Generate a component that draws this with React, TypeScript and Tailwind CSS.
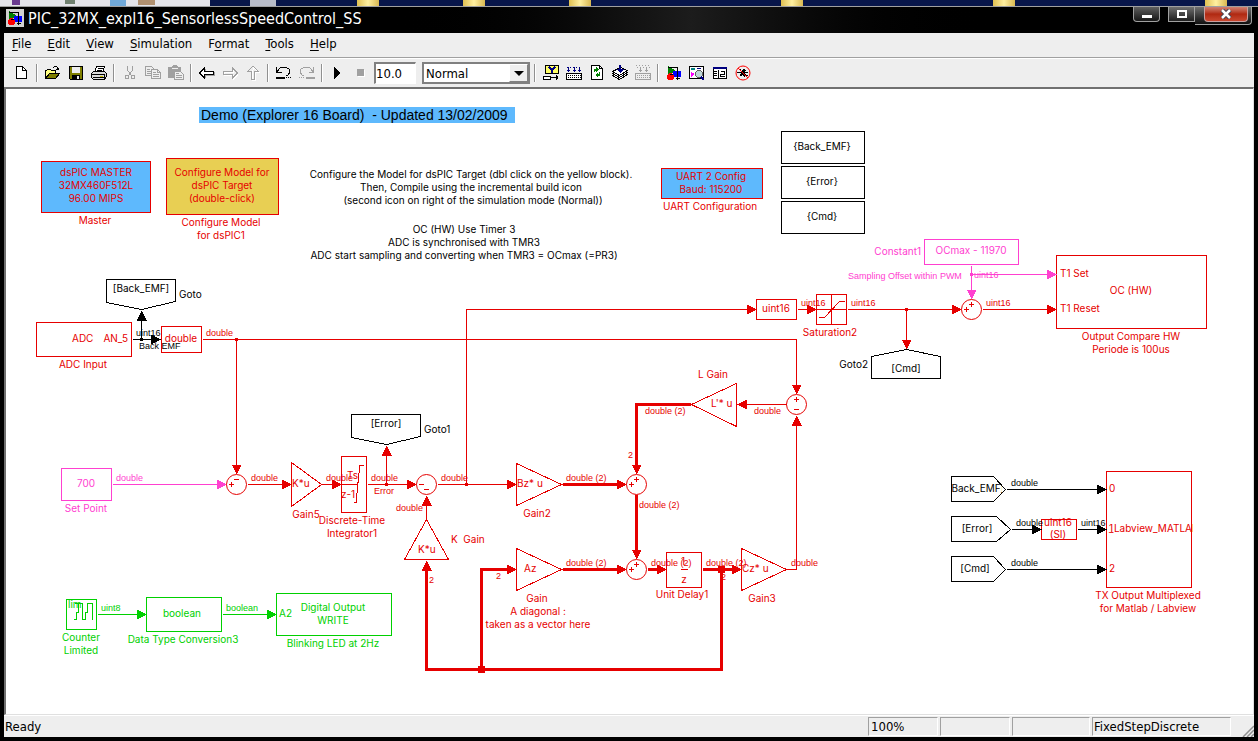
import React from "react";

const RED = "#e60000";
const PINK = "#ff40d0";
const GREEN = "#00d000";
const BLACK = "#000000";
const BLUE = "#5eb9fd";
const YELLOW = "#e8cf53";

/* ---------- diagram primitives ---------- */

type Anchor = "start" | "middle" | "end";
type Pt = [number, number];

function Txt({ x, y, c = RED, a = "middle", children }: { x: number; y: number; c?: string; a?: Anchor; children: React.ReactNode }) {
  return (
    <text x={x} y={y} fill={c} textAnchor={a} className="text-[10px] whitespace-pre [font-family:Inter,'Liberation_Sans',sans-serif]">
      {children}
    </text>
  );
}

function Sig({ x, y, c = RED, children }: { x: number; y: number; c?: string; children: string }) {
  return (
    <text x={x} y={y} fill={c} className="text-[9px]">
      {children}
    </text>
  );
}

function Box({ x1, y1, x2, y2, c = RED, fill = "#ffffff" }: { x1: number; y1: number; x2: number; y2: number; c?: string; fill?: string }) {
  return <rect x={x1} y={y1} width={x2 - x1} height={y2 - y1} stroke={c} fill={fill} />;
}

function Poly({ p, c = RED }: { p: Pt[]; c?: string }) {
  return <polygon points={p.map((q) => q.join(",")).join(" ")} stroke={c} fill="#ffffff" />;
}

const HEAD: Record<string, string> = {
  r: "M0 0L-10 -5V5Z",
  l: "M0 0L10 -5V5Z",
  u: "M0 0L-5 10H5Z",
  d: "M0 0L-5 -10H5Z",
};

function Wire({ p, c = RED, w = 1, head }: { p: Pt[]; c?: string; w?: number; head?: "r" | "l" | "u" | "d" }) {
  const end = p[p.length - 1];
  const line = p.slice();
  if (head) {
    const back: Record<string, Pt> = { r: [-4, 0], l: [4, 0], u: [0, 4], d: [0, -4] };
    line[line.length - 1] = [end[0] + back[head][0], end[1] + back[head][1]];
  }
  return (
    <g>
      <polyline points={line.map((q) => q.join(",")).join(" ")} stroke={c} strokeWidth={w} fill="none" />
      {head && <path d={HEAD[head]} transform={`translate(${end[0]} ${end[1]})`} fill={c} />}
    </g>
  );
}

function Dot({ x, y, c = RED, s = 3 }: { x: number; y: number; c?: string; s?: number }) {
  return <rect x={x - s / 2} y={y - s / 2} width={s} height={s} fill={c} />;
}

function Sum({ x, y, signs }: { x: number; y: number; signs: { dx: number; dy: number; plus: boolean }[] }) {
  return (
    <g>
      <circle cx={x} cy={y} r={10} stroke={RED} fill="#ffffff" shapeRendering="auto" />
      {signs.map((s, i) => (
        <path key={i} d={s.plus ? "M-2.5 0H2.5M0 -2.5V2.5" : "M-2.5 0H2.5"} transform={`translate(${x + s.dx} ${y + s.dy})`} stroke={RED} />
      ))}
    </g>
  );
}

const left = (plus: boolean) => ({ dx: -5, dy: 0, plus });
const top = (plus: boolean) => ({ dx: 0, dy: -5, plus });
const bottom = (plus: boolean) => ({ dx: 0, dy: 5, plus });

function Shapes() {
  return (
    <g transform="translate(0.5 0.5)" fill="none" shapeRendering="crispEdges">
      {/* configuration blocks */}
      <Box x1={41} y1={161} x2={150} y2={212} fill={BLUE} />
      <Box x1={166} y1={158} x2={278} y2={214} fill={YELLOW} />
      <Box x1={661} y1={168} x2={762} y2={198} fill={BLUE} />
      <Box x1={781} y1={131} x2={864} y2={163} c={BLACK} />
      <Box x1={781} y1={166} x2={864} y2={198} c={BLACK} />
      <Box x1={781} y1={201} x2={864} y2={233} c={BLACK} />

      {/* ADC */}
      <Poly c={BLACK} p={[[106, 279], [175, 279], [175, 301], [141, 309], [106, 302]]} />
      <Box x1={36} y1={322} x2={131} y2={356} />
      <Box x1={161} y1={326} x2={201} y2={352} />
      <Wire c={BLACK} p={[[132, 339], [160, 339]]} head="r" />
      <Wire c={BLACK} p={[[141, 339], [141, 310]]} head="u" />
      <Dot x={141} y={339} c={BLACK} />
      <Wire p={[[202, 339], [796, 339], [796, 394]]} head="d" />
      <Wire p={[[236, 339], [236, 474]]} head="d" />
      <Dot x={236} y={339} />

      {/* set point and error path */}
      <Box x1={61} y1={468} x2={111} y2={500} c={PINK} />
      <Wire c={PINK} p={[[112, 484], [226, 484]]} head="r" />
      <Sum x={236} y={484} signs={[left(true), top(false)]} />
      <Poly p={[[291, 462], [291, 506], [321, 484]]} />
      <Wire p={[[247, 484], [291, 484]]} head="r" />
      <Box x1={341} y1={456} x2={366} y2={512} />
      <Wire p={[[321, 484], [341, 484]]} head="r" />
      <path d="M341 484H357M353 502H356L357 484L358 480L359 465H363" stroke={RED} />
      <Wire p={[[367, 484], [416, 484]]} head="r" />
      <Poly c={BLACK} p={[[351, 414], [420, 414], [420, 436], [386, 444], [351, 437]]} />
      <Wire p={[[386, 484], [386, 445]]} head="u" />
      <Dot x={386} y={484} />
      <Sum x={426} y={484} signs={[left(false), bottom(false)]} />
      <Wire p={[[437, 484], [516, 484]]} head="r" />
      <Wire p={[[466, 484], [466, 309], [756, 309]]} head="r" />
      <Dot x={466} y={484} />

      {/* K gain feedback */}
      <Poly p={[[426, 519], [404, 559], [448, 559]]} />
      <Wire p={[[426, 519], [426, 495]]} head="u" />
      <Wire w={3} p={[[721, 569], [721, 669], [426, 669], [426, 560]]} head="u" />
      <Wire w={3} p={[[481, 669], [481, 569], [516, 569]]} head="r" />
      <Dot x={481} y={669} s={7} />

      {/* observer */}
      <Poly p={[[516, 463], [516, 505], [561, 484]]} />
      <Poly p={[[516, 548], [516, 590], [561, 569]]} />
      <Wire w={3} p={[[562, 484], [626, 484]]} head="r" />
      <Wire w={3} p={[[562, 569], [626, 569]]} head="r" />
      <Poly p={[[736, 383], [736, 426], [691, 404]]} />
      <Wire w={3} p={[[690, 404], [636, 404], [636, 474]]} head="d" />
      <Wire w={3} p={[[636, 494], [636, 559]]} head="d" />
      <Sum x={636} y={484} signs={[left(true), top(true)]} />
      <Sum x={636} y={569} signs={[left(true), top(true)]} />
      <Wire w={3} p={[[647, 569], [666, 569]]} head="r" />
      <Box x1={666} y1={552} x2={701} y2={587} />
      <path d="M680 569H687" stroke={RED} />
      <Poly p={[[741, 548], [741, 590], [786, 569]]} />
      <Wire w={3} p={[[702, 569], [741, 569]]} head="r" />
      <Dot x={721} y={569} s={7} />
      <Wire p={[[786, 569], [796, 569], [796, 415]]} head="u" />
      <Sum x={796} y={404} signs={[top(true), bottom(false)]} />
      <Wire p={[[786, 404], [736, 404]]} head="l" />

      {/* output compare */}
      <Box x1={756} y1={299} x2={796} y2={319} />
      <Box x1={816} y1={294} x2={846} y2={324} />
      <path d="M831 294V324M816 309H846M818 317H824L839 301H844" stroke={RED} />
      <Wire p={[[797, 309], [816, 309]]} head="r" />
      <Wire p={[[847, 309], [961, 309]]} head="r" />
      <Poly c={BLACK} p={[[871, 356], [906, 349], [940, 356], [940, 378], [871, 378]]} />
      <Wire p={[[906, 309], [906, 349]]} head="d" />
      <Dot x={906} y={309} />
      <Box x1={924} y1={239} x2={1018} y2={264} c={PINK} />
      <Wire c={PINK} p={[[971, 265], [971, 299]]} head="d" />
      <Box x1={1056} y1={255} x2={1206} y2={328} />
      <Wire c={PINK} p={[[971, 274], [1056, 274]]} head="r" />
      <Dot x={971} y={274} c={PINK} />
      <Sum x={971} y={309} signs={[left(true), top(true)]} />
      <Wire p={[[982, 309], [1056, 309]]} head="r" />

      {/* serial output */}
      <Poly c={BLACK} p={[[951, 476], [993, 476], [1005, 489], [993, 501], [951, 501]]} />
      <Poly c={BLACK} p={[[951, 516], [996, 516], [1010, 529], [996, 541], [951, 541]]} />
      <Poly c={BLACK} p={[[951, 556], [993, 556], [1005, 569], [993, 581], [951, 581]]} />
      <Box x1={1106} y1={471} x2={1191} y2={587} />
      <Box x1={1041} y1={519} x2={1076} y2={539} />
      <Wire c={BLACK} p={[[1006, 489], [1106, 489]]} head="r" />
      <Wire c={BLACK} p={[[1011, 529], [1041, 529]]} head="r" />
      <Wire c={BLACK} p={[[1077, 529], [1106, 529]]} head="r" />
      <Wire c={BLACK} p={[[1006, 569], [1106, 569]]} head="r" />

      {/* blinking LED */}
      <Box x1={66} y1={599} x2={96} y2={629} c={GREEN} />
      <path d="M73 619H76V612H78V603H82V619H85V612H87V603H92V619M74 603H79" stroke={GREEN} />
      <Box x1={146} y1={597} x2={221} y2={631} c={GREEN} />
      <Box x1={276} y1={593} x2={391} y2={635} c={GREEN} />
      <Wire c={GREEN} p={[[97, 614], [146, 614]]} head="r" />
      <Wire c={GREEN} p={[[222, 614], [276, 614]]} head="r" />
    </g>
  );
}

function Texts() {
  return (
    <g>
      <rect x={199} y={107} width={316} height={16} fill={BLUE} />
      <text x={201} y={120} className="text-[14px] whitespace-pre">Demo (Explorer 16 Board)  - Updated 13/02/2009</text>

      <Txt x={96} y={176}>dsPIC MASTER</Txt>
      <Txt x={96} y={189}>32MX460F512L</Txt>
      <Txt x={96} y={202}>96.00 MIPS</Txt>
      <Txt x={95} y={224}>Master</Txt>
      <Txt x={222} y={176}>Configure Model for</Txt>
      <Txt x={222} y={189}>dsPIC Target</Txt>
      <Txt x={222} y={202}>(double-click)</Txt>
      <Txt x={221} y={226}>Configure Model</Txt>
      <Txt x={221} y={239}>for dsPIC1</Txt>

      <Txt x={471} y={178} c={BLACK}>Configure the Model for dsPIC Target (dbl click on the yellow block).</Txt>
      <Txt x={471} y={191} c={BLACK}>Then, Compile using the incremental build icon</Txt>
      <Txt x={473} y={204} c={BLACK}>(second icon on right of the simulation mode (Normal))</Txt>
      <Txt x={464} y={233} c={BLACK}>OC (HW) Use Timer 3</Txt>
      <Txt x={464} y={246} c={BLACK}>ADC is synchronised with TMR3</Txt>
      <Txt x={464} y={259} c={BLACK}>ADC start sampling and converting when TMR3 = OCmax (=PR3)</Txt>

      <Txt x={711} y={180}>UART 2 Config</Txt>
      <Txt x={711} y={193}>Baud: 115200</Txt>
      <Txt x={710} y={210}>UART Configuration</Txt>
      <Txt x={822} y={150} c={BLACK}>{"{Back_EMF}"}</Txt>
      <Txt x={822} y={185} c={BLACK}>{"{Error}"}</Txt>
      <Txt x={822} y={220} c={BLACK}>{"{Cmd}"}</Txt>

      <Txt x={141} y={292} c={BLACK}>[Back_EMF]</Txt>
      <Txt x={179} y={298} c={BLACK} a="start">Goto</Txt>
      <Txt x={72} y={342} a="start">ADC</Txt>
      <Txt x={128} y={342} a="end">AN_5</Txt>
      <Txt x={83} y={368}>ADC Input</Txt>
      <Sig x={136} y={336} c={BLACK}>uint16</Sig>
      <Sig x={139} y={349} c={BLACK}>Back EMF</Sig>
      <Txt x={181} y={342}>double</Txt>
      <Sig x={206} y={336}>double</Sig>

      <Txt x={86} y={487} c={PINK}>700</Txt>
      <Txt x={86} y={512} c={PINK}>Set Point</Txt>
      <Sig x={116} y={481} c={PINK}>double</Sig>
      <Sig x={251} y={481}>double</Sig>
      <Txt x={292} y={487} a="start">K*u</Txt>
      <Txt x={306} y={518}>Gain5</Txt>
      <Sig x={326} y={481}>double</Sig>
      <Txt x={347} y={479} a="start">Ts</Txt>
      <Txt x={341} y={498} a="start">z-1</Txt>
      <Txt x={352} y={524}>Discrete-Time</Txt>
      <Txt x={352} y={537}>Integrator1</Txt>
      <Sig x={371} y={481}>double</Sig>
      <Sig x={374} y={494}>Error</Sig>
      <Txt x={386} y={427} c={BLACK}>[Error]</Txt>
      <Txt x={424} y={433} c={BLACK} a="start">Goto1</Txt>
      <Sig x={441} y={481}>double</Sig>
      <Sig x={396} y={511}>double</Sig>
      <Txt x={418} y={553} a="start">K*u</Txt>
      <Txt x={451} y={543} a="start">K  Gain</Txt>
      <Sig x={429} y={583}>2</Sig>
      <Sig x={496} y={579}>2</Sig>

      <Txt x={517} y={487} a="start">Bz* u</Txt>
      <Txt x={537} y={517}>Gain2</Txt>
      <Txt x={524} y={572} a="start">Az</Txt>
      <Txt x={537} y={602}>Gain</Txt>
      <Txt x={538} y={615}>A diagonal :</Txt>
      <Txt x={538} y={628}>taken as a vector here</Txt>
      <Sig x={566} y={481}>double (2)</Sig>
      <Sig x={566} y={566}>double (2)</Sig>
      <Sig x={639} y={508}>double (2)</Sig>
      <Sig x={651} y={566}>double (2)</Sig>
      <Sig x={706} y={566}>double (2)</Sig>
      <Sig x={721} y={580}>2</Sig>
      <Txt x={683} y={565}>1</Txt>
      <Txt x={684} y={583}>z</Txt>
      <Txt x={682} y={598}>Unit Delay1</Txt>
      <Txt x={742} y={572} a="start">Cz* u</Txt>
      <Txt x={762} y={602}>Gain3</Txt>
      <Sig x={791} y={566}>double</Sig>
      <Sig x={754} y={414}>double</Sig>
      <Txt x={711} y={407} a="start">L'* u</Txt>
      <Txt x={713} y={378}>L Gain</Txt>
      <Sig x={645} y={414}>double (2)</Sig>
      <Sig x={628} y={458}>2</Sig>

      <Txt x={776} y={312}>uint16</Txt>
      <Sig x={801} y={306}>uint16</Sig>
      <Sig x={851} y={306}>uint16</Sig>
      <Txt x={830} y={336}>Saturation2</Txt>
      <Txt x={906} y={372} c={BLACK}>[Cmd]</Txt>
      <Txt x={868} y={368} c={BLACK} a="end">Goto2</Txt>
      <Txt x={971} y={254} c={PINK}>OCmax - 11970</Txt>
      <Txt x={921} y={255} c={PINK} a="end">Constant1</Txt>
      <Sig x={848} y={279} c={PINK}>Sampling Offset within PWM</Sig>
      <Sig x={974} y={278} c={PINK}>uint16</Sig>
      <Sig x={986} y={306}>uint16</Sig>
      <Txt x={1060} y={277} a="start">T1 Set</Txt>
      <Txt x={1131} y={294}>OC (HW)</Txt>
      <Txt x={1060} y={312} a="start">T1 Reset</Txt>
      <Txt x={1131} y={340}>Output Compare HW</Txt>
      <Txt x={1131} y={353}>Periode is 100us</Txt>

      <clipPath id="from-clip"><rect x={952} y={477} width={50} height={24} /></clipPath>
      <g clipPath="url(#from-clip)"><Txt x={976} y={492} c={BLACK}>[Back_EMF]</Txt></g>
      <Txt x={977} y={532} c={BLACK}>[Error]</Txt>
      <Txt x={975} y={572} c={BLACK}>[Cmd]</Txt>
      <Sig x={1011} y={486} c={BLACK}>double</Sig>
      <Sig x={1016} y={526} c={BLACK}>double</Sig>
      <Sig x={1081} y={526} c={BLACK}>uint16</Sig>
      <Sig x={1011} y={566} c={BLACK}>double</Sig>
      <Txt x={1058} y={526}>uint16</Txt>
      <Txt x={1058} y={538}>(SI)</Txt>
      <Txt x={1109} y={492} a="start">0</Txt>
      <Txt x={1109} y={532} a="start">1</Txt>
      <Txt x={1109} y={572} a="start">2</Txt>
      <clipPath id="tx-clip"><rect x={1106} y={472} width={87} height={115} /></clipPath>
      <g clipPath="url(#tx-clip)"><Txt x={1109} y={532} a="start">_Labview_MATLAB</Txt></g>
      <Txt x={1148} y={599}>TX Output Multiplexed</Txt>
      <Txt x={1148} y={612}>for Matlab / Labview</Txt>

      <Txt x={68} y={608} c={GREEN} a="start">lim</Txt>
      <Txt x={81} y={641} c={GREEN}>Counter</Txt>
      <Txt x={81} y={654} c={GREEN}>Limited</Txt>
      <Sig x={101} y={611} c={GREEN}>uint8</Sig>
      <Txt x={182} y={617} c={GREEN}>boolean</Txt>
      <Txt x={183} y={643} c={GREEN}>Data Type Conversion3</Txt>
      <Sig x={226} y={611} c={GREEN}>boolean</Sig>
      <Txt x={279} y={617} c={GREEN} a="start">A2</Txt>
      <Txt x={333} y={611} c={GREEN}>Digital Output</Txt>
      <Txt x={333} y={624} c={GREEN}>WRITE</Txt>
      <Txt x={333} y={647} c={GREEN}>Blinking LED at 2Hz</Txt>
    </g>
  );
}

/* ---------- toolbar icons, 16 x 16 grid ---------- */

const GRAY = "#a0a0a0";

function Icon({ children }: { children: React.ReactNode }) {
  return (
    <svg viewBox="0 0 16 16" className="size-4 shrink-0" fill="none" stroke="none" shapeRendering="crispEdges" aria-hidden="true">
      {children}
    </svg>
  );
}

const icons = {
  new: <Icon><path d="M2.5 1.5H8.5L12.5 5.5V13.5H2.5Z" fill="#fff" stroke="#000" /><path d="M8.5 1.5V5.5H12.5" stroke="#000" /></Icon>,
  open: (
    <Icon>
      <path d="M.5 13V5.5H1.5L2.5 4.5H5.5L6.5 5.5H10.5V8.5H4.5L.5 13.5" fill="#ffff80" stroke="#000" />
      <path d="M.5 13.5L4.5 8.5H14.5L10.5 13.5Z" fill="#808000" stroke="#000" />
      <path d="M8 2.5H9M9 1.5H12M12.5 2V4M13.5 3V5M11 4.5H14" stroke="#000" />
    </Icon>
  ),
  save: (
    <Icon>
      <path d="M1.5 1.5H14.5V14.5H2.5L1.5 13.5Z" fill="#808000" stroke="#000" />
      <path d="M4 2H12V8H4Z" fill="#eee" /><path d="M4 10H12V14H4Z" fill="#000" /><path d="M9 11H11V14H9Z" fill="#eee" />
    </Icon>
  ),
  print: (
    <Icon>
      <path d="M5.5 1.5H13.5L11.5 7.5H3.5Z" fill="#fff" stroke="#000" />
      <path d="M7 3.5H12M6 5.5H11" stroke="#000" />
      <path d="M.5 8.5L2.5 6.5H13.5L15.5 8.5V11.5L13.5 14.5H2.5L.5 12.5Z" fill="#d8d8d8" stroke="#000" />
      <path d="M1 9.5H13M2 12.5H13M13.5 9V14" stroke="#000" /><path d="M9 11H12V12H9Z" fill="#c8c000" />
    </Icon>
  ),
  cut: (
    <Icon>
      <path d="M5.5 1V5L9.5 11M10.5 1V5L6.5 11" stroke={GRAY} />
      <circle cx="5" cy="12" r="2" stroke={GRAY} /><circle cx="11" cy="12" r="2" stroke={GRAY} />
    </Icon>
  ),
  copy: (
    <Icon>
      <path d="M.5 1.5H6.5L8.5 3.5V10.5H.5Z" stroke={GRAY} fill="#eee" /><path d="M2 4.5H5M2 6.5H6M2 8.5H6" stroke={GRAY} />
      <path d="M6.5 4.5H12.5L15.5 7.5V13.5H6.5Z" stroke={GRAY} fill="#eee" /><path d="M8 7.5H11M8 9.5H14M8 11.5H14M12.5 5V7.5H15" stroke={GRAY} />
    </Icon>
  ),
  paste: (
    <Icon>
      <path d="M0 2H4L5 0H9L10 2H13V13H0Z" fill={GRAY} /><path d="M4 3.5H10" stroke="#eee" />
      <path d="M6.5 6.5H12.5L15.5 9.5V14.5H6.5Z" fill="#eee" stroke={GRAY} /><path d="M8 8.5H11M8 10.5H14M8 12.5H14" stroke={GRAY} />
    </Icon>
  ),
  left: <Icon><path d="M6.5 4V7.500H15.500V10.500H6.500V13" stroke="#a0a0a0" /><path d="M.5 8L5.500 3V6.500H14.500V9.500H5.500V13Z" fill="#fff" stroke="#000" /></Icon>,
  right: <Icon><path d="M16.500 9L11.500 4V7.500H2.500V10.500H11.500V14Z" stroke="#fff" /><path d="M15.500 8L10.500 3V6.500H1.500V9.500H10.500V13Z" stroke={GRAY} /></Icon>,
  up: <Icon><path d="M8.500 2L14 7.500H10.500V15.500H7.500V7.500Z" stroke="#fff" /><path d="M8 1L13.500 6.500H9.500V14.500H6.500V6.500H2.500Z" stroke={GRAY} /></Icon>,
  undo: (
    <Icon>
      <path d="M.5 2V7.500H6M1 6.500L4.500 2.500H10.500L13.500 4.500V8L11.500 10.500H10" stroke="#000" />
      <path d="M0 12.500H9" stroke="#000" strokeWidth="2" /><path d="M10 12.500H16" stroke="#000" strokeDasharray="1 1" />
    </Icon>
  ),
  redo: (
    <Icon>
      <path d="M14.500 2V7.500H9.500M14 6.500L10.500 2.500H4.500L1.500 4.500V8L3.500 10.500H5" stroke={GRAY} />
      <path d="M7 12.500H16" stroke={GRAY} strokeWidth="2" /><path d="M0 12.500H6" stroke={GRAY} strokeDasharray="1 1" />
    </Icon>
  ),
  play: <Icon><path d="M4 2L10 8L4 14Z" fill="#000" /></Icon>,
  stop: <Icon><path d="M5 5H12V12H5Z" fill="#fff" /><path d="M4 4H11V11H4Z" fill={GRAY} /></Icon>,
  incremental: (
    <Icon>
      <path d="M2.500 .5H15.500V8.500H2.500Z" fill="#ffff66" stroke="#000" /><path d="M6 2L9 5M12 2L9 5V8" stroke="#000080" strokeWidth="2" />
      <path d="M.5 11.500H7.500V14.500H.5Z" fill="#fff" stroke="#000" /><path d="M8 12.500H15M13.500 10V15M14.500 11V14" stroke="#000" />
    </Icon>
  ),
  buildAll: (
    <Icon>
      <path d="M2.500 2V7M8.500 2V7M13.500 2V7M1 5.500H4M7 5.500H10M12 5.500H15" stroke="#000080" /><path d="M1 2.500H16" stroke="#000080" strokeDasharray="1 2" />
      <path d="M.5 8.500H15.500V14.500H.5Z" fill="#fff" stroke="#000" />
      <path d="M2 10.500H15M2 12.500H15" stroke="#000" strokeDasharray="1 1" />
    </Icon>
  ),
  refresh: (
    <Icon>
      <path d="M2.500 .5H10.500L13.500 3.500V14.500H2.500Z" fill="#fff" stroke="#000" /><path d="M10.500 .5V3.500H13.500" stroke="#000" />
      <path d="M5 7V4H7V2L10 5L7 7V6H6V7ZM11 7V11H9V13L6 10L9 8V9H10V7Z" fill="#008000" />
    </Icon>
  ),
  update: (
    <Icon>
      <path d="M.5 10.500L8.500 6.500L15.500 9.500L7.500 14.500Z" fill="#fff" stroke="#000" />
      <path d="M.5 8.500L8.500 4.500L15.500 7.500L7.500 12.500Z" fill="#fff" stroke="#000" />
      <path d="M.5 6.500L8.500 2.500L15.500 5.500L7.500 10.500Z" fill="#fff" stroke="#000" />
      <path d="M8 0V5" stroke="#000080" strokeWidth="2" /><path d="M4 4H12L8 8Z" fill="#000080" />
    </Icon>
  ),
  build: (
    <Icon>
      <path d="M5.500 2V7M11.500 2V7M4 5.500H7M10 5.500H13" stroke={GRAY} /><path d="M1 .5H15M2 2.500H15" stroke={GRAY} strokeDasharray="1 2" />
      <path d="M.5 8.500H15.500V14.500H.5Z" fill="#eee" stroke={GRAY} />
      <path d="M2 10.500H15M2 12.500H15" stroke={GRAY} strokeDasharray="1 1" />
    </Icon>
  ),
  library: (
    <Icon>
      <path d="M2 1V11L10 6Z" fill="#008000" /><path d="M7 6H15V12H7Z" fill="#0000ff" /><circle cx="4.500" cy="11.500" r="3.500" fill="#ff0000" />
      <path d="M2 2.500H11.500V15M9.500 13.500H13.500M4 9.500H7" stroke="#000" />
    </Icon>
  ),
  explorer: (
    <Icon>
      <path d="M.5 1.500H14.500V13.500H.5Z" fill="#fff" stroke="#000" /><path d="M2 3H6V5H2Z" fill="#008080" /><path d="M8 3.500H12" stroke="#000080" />
      <path d="M2 7L6 9L2 12Z" fill="#ff00ff" /><circle cx="10" cy="9" r="3.500" fill="#c0d8d8" stroke="#606060" /><path d="M12 12L15 15" stroke="#000080" strokeWidth="2" />
    </Icon>
  ),
  browser: (
    <Icon>
      <path d="M1.500 2.500H14.500V13.500H1.500Z" fill="#fff" stroke="#000" /><path d="M1 2H15V4H1Z" fill="#000080" />
      <path d="M2 6.500H5M2 8.500H5M2 10.500H5M6.500 5V13M8.500 6.500H12.500V9.500H8.500V11.500H13" stroke="#000" />
    </Icon>
  ),
  debug: (
    <Icon>
      <path d="M7 5L9 4L11 5L10 8L11 10L9 12L7 10L6 11L4 10L6 8L5 7Z" fill="#000" /><path d="M2 7.500H6M9 7.500H13M4 4.500H6M11 10.500H13" stroke="#000" />
      <g shapeRendering="auto"><circle cx="8" cy="8" r="7" stroke="#ff0000" /><path d="M3 3L13 13" stroke="#ff0000" /></g>
    </Icon>
  ),
};

function Tool({ name, label, disabled }: { name: keyof typeof icons; label: string; disabled?: boolean }) {
  return (
    <button type="button" aria-label={label} disabled={disabled} className="flex h-6 w-[23px] items-center justify-center">
      {icons[name]}
    </button>
  );
}

function Sep() {
  return <span className="mx-[3px] h-[18px] w-[2px] border-l border-[#909090] bg-white" />;
}

function MenuItem({ pre = "", k, rest }: { pre?: string; k: string; rest: string }) {
  return (
    <button type="button">
      {pre}
      <span className="underline underline-offset-2">{k}</span>
      {rest}
    </button>
  );
}

function Folder() {
  return <span className="h-full w-[22px] bg-linear-to-r from-[#e0c050] via-[#fff0a0] to-[#d8b850]" />;
}

export default function App() {
  return (
    <div className="flex min-h-screen flex-col overflow-hidden bg-black text-black [font-family:'Liberation_Sans',Arial,sans-serif]">
      {/* desktop showing above the window */}
      <div className="flex h-[6px] bg-[#08164a]">
        <div className="flex w-[210px] bg-[#e4e4ea] pl-[12px]">
          <span className="h-[5px] w-[8px] bg-[#6a3a90]" />
          <span className="ml-[45px] h-[4px] w-[10px] bg-[#708070]" />
          <span className="ml-[35px] h-[6px] w-[16px] bg-[#70a8d8]" />
          <span className="ml-[12px] h-[5px] w-[17px] bg-[#b09070]" />
        </div>
        <span className="ml-10 h-full w-[26px] bg-[#b8bcc8]" />
        <div className="ml-[81px] flex gap-[84px]">
          <Folder /><Folder /><Folder />
        </div>
        <div className="ml-[190px] flex gap-[190px]">
          <Folder /><Folder /><Folder />
        </div>
      </div>

      <div className="flex flex-1 flex-col border-t border-[#a0a0a0] bg-black pr-1 pb-1 pl-1">
        <header className="flex h-[26px] items-start bg-linear-to-r from-black from-30% via-[#1c1c1c] via-55% to-black to-80%">
          <span className="mt-[2px] ml-[2px] flex size-[18px] items-center justify-center bg-[#d0d0d0]">{icons.library}</span>
          <h1 className="ml-1 flex-1 text-[16px] leading-6 text-white [font-family:'DejaVu_Sans_Condensed','DejaVu_Sans',sans-serif]">PIC_32MX_expl16_SensorlessSpeedControl_SS</h1>
          <div className="flex pr-[2px]">
            <button type="button" aria-label="Minimize" className="mr-2 flex h-[15px] w-[27px] items-center justify-center rounded-b border border-t-0 border-[#a0a0a0] bg-linear-to-b from-[#606060] to-[#181818]">
              <span className="mt-1 h-[3px] w-[10px] bg-white" />
            </button>
            <button type="button" aria-label="Maximize" className="flex h-[15px] w-[27px] items-center justify-center border border-t-0 border-[#a0a0a0] bg-linear-to-b from-[#707070] to-[#202020]">
              <span className="h-[8px] w-[10px] border-2 border-white" />
            </button>
            <span className="flex h-[18px] rounded-br border-r border-b border-[#a0a0a0] bg-linear-to-b from-[#707070] to-[#101010] pr-[3px] pl-[9px]">
              <button type="button" aria-label="Close" className="flex h-[15px] w-[44px] items-center justify-center rounded-b border border-t-0 border-[#c8a0a0] bg-linear-to-b from-[#d08070] via-[#b02810] to-[#c84830]">
                <svg viewBox="0 0 14 10" className="h-[10px] w-[14px]" aria-hidden="true"><path d="M3 1L11 9M11 1L3 9" stroke="#404050" strokeWidth="4.500" /><path d="M3 1L11 9M11 1L3 9" stroke="#fff" strokeWidth="2.500" /></svg>
              </button>
            </span>
          </div>
        </header>

        <main className="flex flex-1 flex-col bg-[#eeeeee]">
          <nav className="flex h-[25px] items-center gap-4 border-b border-[#a0a0a0] pb-[2px] pl-2 text-[13px] leading-4 [font-family:'DejaVu_Sans_Condensed','DejaVu_Sans',sans-serif]">
            <MenuItem k="F" rest="ile" />
            <MenuItem k="E" rest="dit" />
            <MenuItem k="V" rest="iew" />
            <MenuItem k="S" rest="imulation" />
            <MenuItem pre="F" k="o" rest="rmat" />
            <MenuItem k="T" rest="ools" />
            <MenuItem k="H" rest="elp" />
          </nav>

          <div className="flex h-[29px] items-center border-t border-white pl-[6px] [font-family:'DejaVu_Sans_Condensed','DejaVu_Sans',sans-serif]">
            <Tool name="new" label="New model" />
            <Sep />
            <Tool name="open" label="Open model" />
            <Tool name="save" label="Save" />
            <Tool name="print" label="Print" />
            <Sep />
            <Tool name="cut" label="Cut" disabled />
            <Tool name="copy" label="Copy" disabled />
            <Tool name="paste" label="Paste" disabled />
            <Sep />
            <Tool name="left" label="Back" />
            <Tool name="right" label="Forward" disabled />
            <Tool name="up" label="Go to parent system" disabled />
            <Sep />
            <Tool name="undo" label="Undo" />
            <Tool name="redo" label="Redo" disabled />
            <Sep />
            <Tool name="play" label="Start simulation" />
            <Tool name="stop" label="Stop" disabled />
            <input aria-label="Simulation stop time" defaultValue="10.0" className="ml-[2px] h-[22px] w-[42px] border-t-2 border-r border-b border-l-2 border-t-[#808080] border-r-white border-b-white border-l-[#808080] bg-white text-[13px]" />
            <div className="mr-px ml-[6px] flex h-[22px] w-[108px] border-2 border-[#808080] bg-white">
              <select aria-label="Simulation mode" defaultValue="Normal" className="min-w-0 flex-1 appearance-none bg-white pl-[2px] text-[13px]">
                <option>Normal</option>
                <option>Accelerator</option>
                <option>External</option>
              </select>
              <span className="pointer-events-none flex w-[19px] items-center justify-center border border-t-white border-r-[#808080] border-b-[#808080] border-l-white bg-[#eeeeee]">
                <svg viewBox="0 0 10 5" className="h-[5px] w-[10px]" aria-hidden="true"><path d="M0 0H10L5 5Z" /></svg>
              </span>
            </div>
            <Sep />
            <Tool name="incremental" label="Incremental build" />
            <Tool name="buildAll" label="Build all" />
            <Tool name="refresh" label="Refresh model blocks" />
            <Tool name="update" label="Update diagram" />
            <Tool name="build" label="Build subsystem" disabled />
            <Sep />
            <Tool name="library" label="Library browser" />
            <Tool name="explorer" label="Model explorer" />
            <Tool name="browser" label="Model browser" />
            <Tool name="debug" label="Debug" />
          </div>

          <section aria-label="Model" className="flex-1 overflow-hidden border-t-2 border-r border-b border-l-2 border-t-[#707070] border-r-[#e0e0e0] border-b-[#e0e0e0] border-l-[#707070] bg-white">
            <svg viewBox="6 89 1247 625" className="block h-[625px] w-[1247px] max-w-none" role="img" aria-label="Sensorless speed control block diagram">
              <Shapes />
              <Texts />
            </svg>
          </section>

          <footer className="flex h-[22px] items-center gap-[2px] border-t border-white text-[13px] [font-family:'DejaVu_Sans_Condensed','DejaVu_Sans',sans-serif]">
            <span className="flex-1 pl-px">Ready</span>
            <span className="h-[19px] w-[70px] border border-[#a0a0a0] border-r-white border-b-white pl-[2px] leading-[18px]">100%</span>
            <span className="h-[19px] w-[70px] border border-[#a0a0a0] border-r-white border-b-white" />
            <span className="h-[19px] w-[78px] border border-[#a0a0a0] border-r-white border-b-white" />
            <span className="h-[19px] w-[139px] border border-[#a0a0a0] border-r-white border-b-white pl-px leading-[18px]">FixedStepDiscrete</span>
            <svg viewBox="0 0 12 12" className="ml-[9px] size-3 self-end" aria-hidden="true"><path d="M1 12L12 1M5 12L12 5M9 12L12 9" stroke="#909090" strokeWidth="1.500" /></svg>
          </footer>
        </main>
      </div>
    </div>
  );
}
